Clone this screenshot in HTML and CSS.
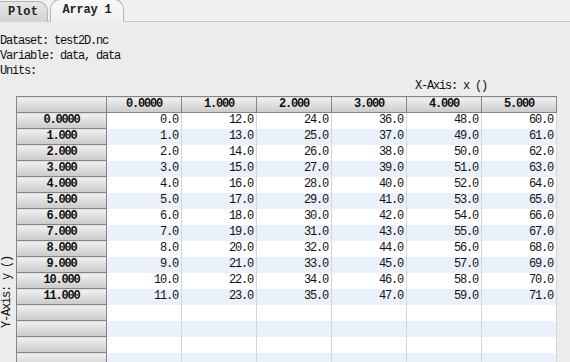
FILE: index.html
```html
<!DOCTYPE html>
<html>
  <head>
    <meta charset="utf-8" />
    <link rel="stylesheet" href="styles.css">
  </head>

  <body>
    <div class="tabbar">
      <div class="tab">Plot</div>
      <div class="tab active">Array 1</div>
    </div>

    <div class="panel">
      <div class="info">
        <div>Dataset: test2D.nc</div>
        <div>Variable: data, data</div>
        <div>Units:</div>
      </div>

      <div class="x-axis">X-Axis: x ()</div>

      <div class="grid-area">
        <div class="y-axis"><span>Y-Axis: y ()</span></div>

        <table class="data-table">
          <thead>
            <tr>
              <th class="corner"></th>
              <th>0.0000</th>
              <th>1.000</th>
              <th>2.000</th>
              <th>3.000</th>
              <th>4.000</th>
              <th>5.000</th>
            </tr>
          </thead>
          <tbody id="rows"></tbody>
        </table>
      </div>
    </div>

    <script>
      const rows = document.querySelector('#rows')
      const labels = ['0.0000', '1.000', '2.000', '3.000', '4.000', '5.000',
        '6.000', '7.000', '8.000', '9.000', '10.000', '11.000']

      for (let r = 0; r < 17; r++) {
        const tr = document.createElement('tr')
        const th = document.createElement('th')
        th.textContent = labels[r] || ''
        tr.append(th)

        for (let c = 0; c < 6; c++) {
          const td = document.createElement('td')
          if (r < labels.length) td.textContent = (r + c * 12).toFixed(1)
          tr.append(td)
        }
        rows.append(tr)
      }
    </script>
  </body>
</html>
```

FILE: styles.css
```css
html,
body {
  margin: 0;
  height: 100%;
  overflow: hidden;
}

body {
  background-color: #ececec;
  color: #111;
  font-family: "Liberation Mono", monospace;
  font-size: 12px;
  letter-spacing: -1.2px;
}

.tabbar {
  height: 21px;
  display: flex;
  align-items: flex-end;
  gap: 2px;
  background-color: #f0f0f0;
  border-bottom: 1px solid #c4c4c4;
}

.tab {
  height: 20px;
  line-height: 20px;
  padding: 0 9px 0 8px;
  margin-bottom: -1px;
  border: 1px solid #b4b4b4;
  border-left: none;
  border-bottom: none;
  border-radius: 0 10px 0 0;
  background: linear-gradient(#e6e6e6, #d2d2d2);
  font-weight: bold;
  letter-spacing: 0.4px;
  color: #222;
}

.tab.active {
  padding: 0 12px 0 11px;
  height: 21px;
  border-left: 1px solid #b4b4b4;
  border-radius: 10px 10px 0 0;
  background: linear-gradient(#fafafa, #f0f0f0);
  border-bottom: 1px solid #f0f0f0;
  letter-spacing: -0.2px;
}

.info {
  margin-top: 12px;
  line-height: 15px;
}

.x-axis {
  line-height: 15px;
  padding-left: 415px;
}

.grid-area {
  display: flex;
  margin-top: 2px;
}

.y-axis {
  width: 16px;
  padding-top: 160px;
}

.y-axis span {
  display: block;
  writing-mode: vertical-rl;
  transform: rotate(180deg);
  line-height: 14px;
}

.data-table {
  border-collapse: collapse;
  table-layout: fixed;
  width: 541px;
}

.data-table th,
.data-table td {
  height: 15px;
  padding: 0;
  line-height: 15px;
  white-space: nowrap;
  overflow: hidden;
}

.data-table th {
  width: 74px;
  border: 1px solid #858585;
  background: linear-gradient(#f2f2f2, #cacaca);
  font-weight: bold;
  text-align: center;
  color: #111;
}

.data-table th.corner,
.data-table tbody th {
  width: 89px;
}

.data-table td {
  text-align: right;
  padding-right: 3px;
  border-left: 1px solid #d6d6d6;
  border-right: 1px solid #d6d6d6;
  background-color: #fff;
}

.data-table tbody tr:nth-child(even) td {
  background-color: #ebf1fb;
}
```
